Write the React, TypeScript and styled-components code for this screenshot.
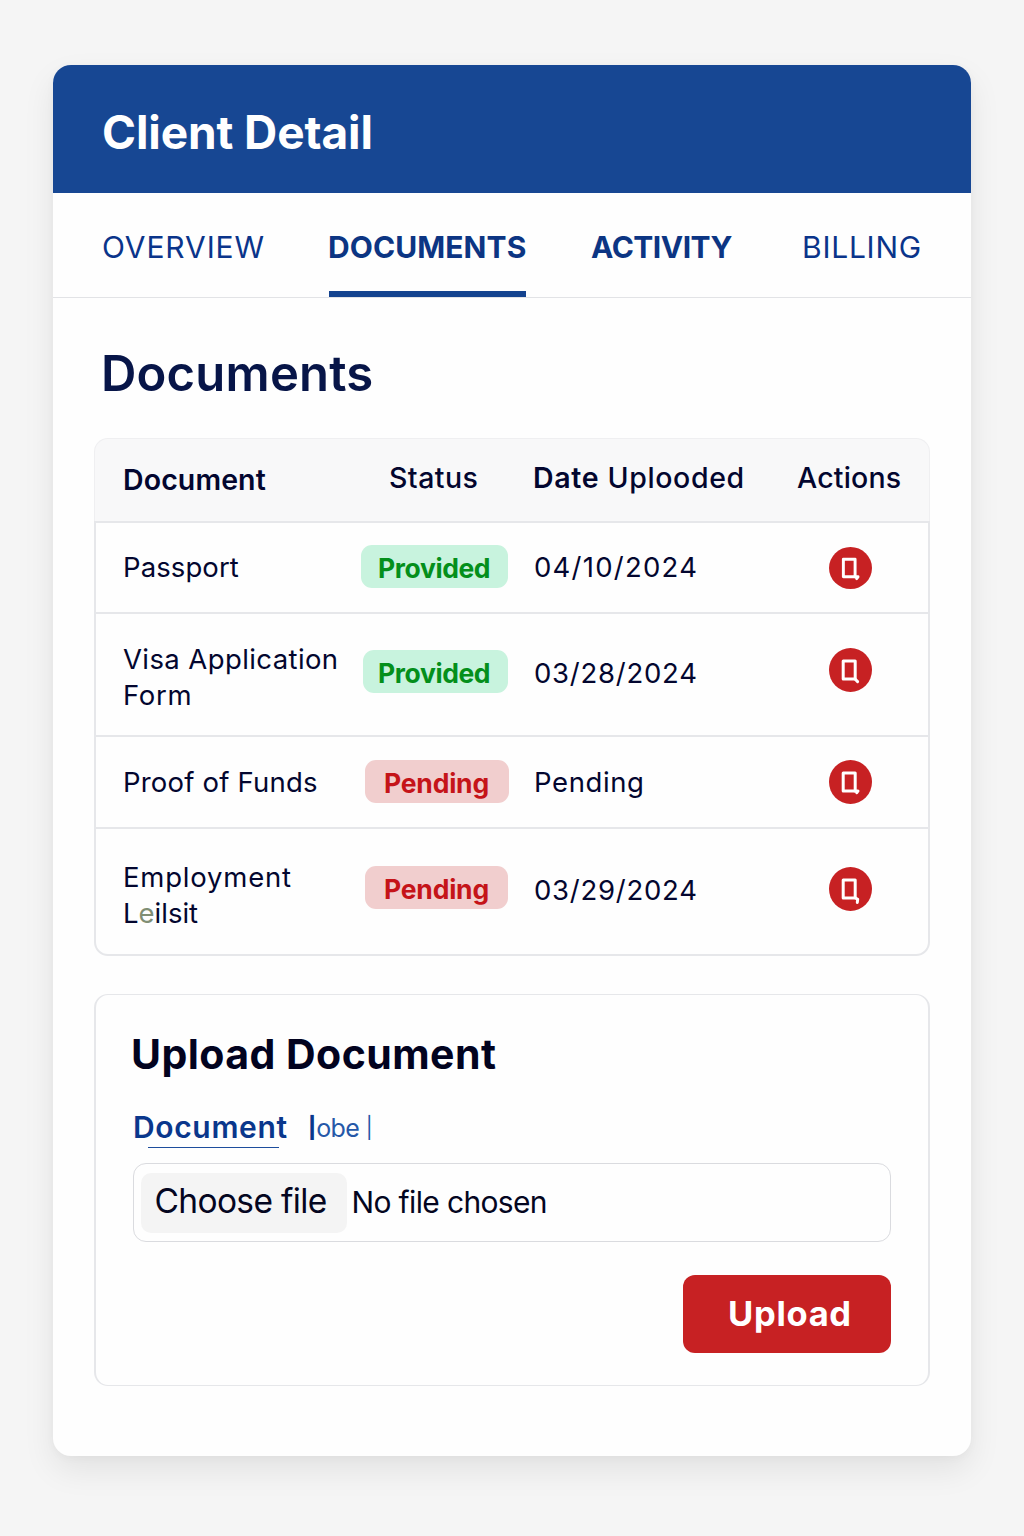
import React from 'react';
import styled, { createGlobalStyle, css } from 'styled-components';

const GlobalStyle = createGlobalStyle`
  *, *::before, *::after { box-sizing: border-box; }
  body {
    margin: 0;
    background: #f5f5f5;
    color: #03062f;
    font-family: Inter, "Liberation Sans", sans-serif;
  }
  button { font-family: inherit; border: 0; background: none; padding: 0; text-align: left; cursor: pointer; }
  h1, h2, h3 { margin: 0; }
`;

const line = '#e6e7ea';

const Page = styled.div`
  height: 1536px;
  padding: 65px 53px 0;
  overflow: hidden;
`;

const Card = styled.main`
  width: 918px;
  height: 1391px;
  border-radius: 18px;
  background: #fefefe;
  overflow: hidden;
  box-shadow: 0 14px 32px rgba(0, 0, 0, 0.08), 0 2px 10px rgba(0, 0, 0, 0.03);
`;

const Header = styled.header`
  height: 128px;
  padding: 37px 0 0 49px;
  background: #174793;
`;

const PageTitle = styled.h1`
  font-size: 46px;
  font-weight: 700;
  line-height: 60px;
  letter-spacing: -0.1px;
  color: #fff;
`;

const Tabs = styled.nav`
  display: grid;
  grid-template-columns: 227px 262px 211px 1fr;
  justify-items: start;
  height: 105px;
  padding-left: 49px;
  box-shadow: inset 0 -1px 0 #e2e3e6;
`;

const Tab = styled.button<{ $strong?: boolean; $active?: boolean; $track: number }>`
  height: 104px;
  font-size: 30px;
  line-height: 109px;
  white-space: nowrap;
  font-weight: ${p => (p.$strong ? 700 : 400)};
  letter-spacing: ${p => p.$track}px;
  color: ${p => (p.$strong ? '#0c3583' : '#0a348a')};
  ${p =>
    p.$active &&
    css`
      width: 197px;
      text-indent: -1px;
      border-bottom: 6px solid #14438f;
    `}
`;

const Content = styled.div`
  padding: 45px 41px 0;
`;

const SectionTitle = styled.h2`
  margin: 0 0 34px 7px;
  padding-top: 1px;
  font-size: 49px;
  font-weight: 600;
  line-height: 60px;
  letter-spacing: 0.2px;
  color: #071548;
`;

const Table = styled.div`
  width: 836px;
`;

const HeadRow = styled.div`
  display: grid;
  grid-template-columns: 266px 144px 264px 1fr;
  height: 83px;
  padding-left: 28px;
  padding-top: 19px;
  border: 1px solid #efeff1;
  border-bottom: 0;
  border-radius: 14px 14px 0 0;
  background: #f8f8f9;
`;

const HeadCell = styled.div<{ $strong?: boolean; $track: number; $top?: number }>`
  padding-top: ${p => p.$top ?? 0}px;
  font-size: 28.5px;
  line-height: 40px;
  white-space: nowrap;
  font-weight: ${p => (p.$strong ? 600 : 500)};
  letter-spacing: ${p => p.$track}px;

  b {
    font-weight: 600;
    letter-spacing: 0.7px;
  }
`;

const Body = styled.div`
  border: 2px solid ${line};
  border-radius: 0 0 14px 14px;
`;

const Row = styled.div<{ $height: number }>`
  display: grid;
  grid-template-columns: 238px 173px 257px 118px;
  align-items: start;
  height: ${p => p.$height}px;
  padding-left: 27px;
  border-bottom: 2px solid ${line};

  &:last-child {
    border-bottom: 0;
  }
`;

const Name = styled.div<{ $top: number }>`
  margin-top: ${p => p.$top}px;
  font-size: 27.5px;
  line-height: 36px;
  white-space: nowrap;
`;

const NameLine = styled.div<{ $track: number }>`
  letter-spacing: ${p => p.$track}px;
`;

const Faded = styled.span`
  color: #808e74;
`;

const Pill = styled.span<{ $kind: Status; $top: number; $inset: number; $width: number }>`
  height: 43px;
  width: ${p => p.$width}px;
  margin: ${p => p.$top}px 0 0 ${p => p.$inset}px;
  padding-left: ${p => (p.$kind === 'Provided' ? 17 - p.$inset : 19)}px;
  border-radius: 11px;
  font-size: 26.5px;
  font-weight: 650;
  line-height: 46px;
  background: ${p => (p.$kind === 'Provided' ? '#c8f3de' : '#f1cece')};
  color: ${p => (p.$kind === 'Provided' ? '#048f1b' : '#c51419')};
  letter-spacing: ${p => (p.$kind === 'Provided' ? -0.4 : -0.2)}px;
`;

const DateCell = styled.div<{ $top: number; $track: number }>`
  margin-top: ${p => p.$top}px;
  font-size: 27.5px;
  line-height: 36px;
  letter-spacing: ${p => p.$track}px;
`;

const ActionButton = styled.button<{ $top: number; $height: number }>`
  justify-self: center;
  width: 43px;
  height: ${p => p.$height}px;
  margin-top: ${p => p.$top}px;
  border-radius: 50%;
  background: #c72123;

  svg {
    display: block;
    width: 100%;
    height: 100%;
  }
`;

const UploadCard = styled.section`
  width: 836px;
  height: 392px;
  margin-top: 38px;
  padding: 34px 37px 0;
  border: solid ${line};
  border-width: 1px 2px;
  border-radius: 14px;
`;

const UploadTitle = styled.h3`
  margin-left: -2px;
  font-size: 41px;
  font-weight: 700;
  line-height: 50px;
  letter-spacing: 0.45px;
  color: #02031f;
`;

const FieldTabs = styled.div`
  display: flex;
  height: 56px;
  margin-top: 28px;
  color: #2558a8;
`;

const FieldTab = styled.div`
  width: 175px;
  font-size: 30px;
  font-weight: 600;
  line-height: 40px;
  letter-spacing: 0.65px;
  color: #0a378c;

  &::after {
    content: '';
    display: block;
    width: 131px;
    height: 1px;
    margin-left: 15px;
    background: #1d4d9c;
  }
`;

const FieldHint = styled.div`
  font-size: 25px;
  line-height: 42px;
  letter-spacing: -0.6px;
  white-space: pre;
`;

const Divider = styled.span<{ $strong?: boolean }>`
  font-size: 21px;
  vertical-align: 2px;
  letter-spacing: ${p => (p.$strong ? 0 : 0.8)}px;
  font-weight: ${p => (p.$strong ? 800 : 400)};
  ${p => p.$strong && 'color: #0a378c;'}
`;

const FileField = styled.div`
  display: flex;
  align-items: center;
  width: 758px;
  height: 79px;
  padding-left: 7px;
  border: 1px solid #dadbdf;
  border-radius: 13px;
  color: #04061f;
`;

const ChooseButton = styled.button`
  width: 206px;
  height: 60px;
  padding: 0 0 4px 13.5px;
  border-radius: 10px;
  background: #f4f4f4;
  color: inherit;
  font-size: 33.5px;
  line-height: 56px;
  letter-spacing: -0.65px;
`;

const FileName = styled.span`
  padding: 0 0 1px 4.5px;
  font-size: 30px;
  letter-spacing: -0.65px;
`;

const UploadButton = styled.button`
  display: block;
  width: 208px;
  height: 78px;
  margin: 33px 0 0 auto;
  padding-left: 45px;
  border-radius: 12px;
  background: #c72123;
  color: #fff;
  font-size: 34.5px;
  font-weight: 700;
  line-height: 76px;
  letter-spacing: 0.7px;
`;

type Status = 'Provided' | 'Pending';

interface Doc {
  height: number;
  name: { text: React.ReactNode; track: number }[];
  nameTop: number;
  status: Status;
  pill: { top: number; inset: number; width: number };
  date: string;
  dateTop: number;
  dateTrack: number;
  action: { top: number; height: number; tail: string };
}

const docs: Doc[] = [
  {
    height: 91,
    name: [{ text: 'Passport', track: 0.1 }],
    nameTop: 26,
    status: 'Provided',
    pill: { top: 22, inset: 0, width: 147 },
    date: '04/10/2024',
    dateTop: 26,
    dateTrack: 1.25,
    action: { top: 24, height: 42, tail: 'M26 30.5h3.2l-1.4 1.9' },
  },
  {
    height: 123,
    name: [
      { text: 'Visa Application', track: 0.4 },
      { text: 'Form', track: 0.7 },
    ],
    nameTop: 27,
    status: 'Provided',
    pill: { top: 36, inset: 2, width: 145 },
    date: '03/28/2024',
    dateTop: 41,
    dateTrack: 0.75,
    action: { top: 34, height: 44, tail: 'M26 30.5l2.6 2.6' },
  },
  {
    height: 92,
    name: [{ text: 'Proof of Funds', track: 0.2 }],
    nameTop: 27,
    status: 'Pending',
    pill: { top: 23, inset: 4, width: 144 },
    date: 'Pending',
    dateTop: 27,
    dateTrack: 0.6,
    action: { top: 23, height: 44, tail: 'M26 30.5h3l-1.2 1.7' },
  },
  {
    height: 125,
    name: [
      { text: 'Employment', track: 0.8 },
      { text: <>L<Faded>e</Faded>ilsit</>, track: 0 },
    ],
    nameTop: 30,
    status: 'Pending',
    pill: { top: 37, inset: 4, width: 143 },
    date: '03/29/2024',
    dateTop: 43,
    dateTrack: 0.75,
    action: { top: 38, height: 44, tail: 'M26.5 30.5l2.2 1.2-.4 3.2' },
  },
];

const PageGlyph = ({ tail }: { tail: string }) => (
  <svg viewBox="0 0 43 43" fill="none" stroke="#fff" strokeWidth="3" strokeLinecap="round" strokeLinejoin="round">
    <path d="M14.2 12.5h12v18h-12z" />
    <path d={tail} />
  </svg>
);

export default function App() {
  return (
    <>
      <GlobalStyle />
      <Page>
        <Card>
          <Header>
            <PageTitle>Client Detail</PageTitle>
          </Header>
          <Tabs>
            <Tab $track={0.9}>OVERVIEW</Tab>
            <Tab $strong $active $track={0.08}>DOCUMENTS</Tab>
            <Tab $strong $track={-0.5}>ACTIVITY</Tab>
            <Tab $track={0.75}>BILLING</Tab>
          </Tabs>
          <Content>
            <SectionTitle>Documents</SectionTitle>
            <Table>
              <HeadRow>
                <HeadCell $strong $track={0.1} $top={2}>Document</HeadCell>
                <HeadCell $track={0.45}>Status</HeadCell>
                <HeadCell $track={0.6}><b>Date</b> Uplooded</HeadCell>
                <HeadCell $track={0.2}>Actions</HeadCell>
              </HeadRow>
              <Body>
                {docs.map((doc, i) => (
                  <Row key={i} $height={doc.height}>
                    <Name $top={doc.nameTop}>
                      {doc.name.map((part, j) => (
                        <NameLine key={j} $track={part.track}>{part.text}</NameLine>
                      ))}
                    </Name>
                    <Pill $kind={doc.status} $top={doc.pill.top} $inset={doc.pill.inset} $width={doc.pill.width}>
                      {doc.status}
                    </Pill>
                    <DateCell $top={doc.dateTop} $track={doc.dateTrack}>{doc.date}</DateCell>
                    <ActionButton $top={doc.action.top} $height={doc.action.height} aria-label="View document">
                      <PageGlyph tail={doc.action.tail} />
                    </ActionButton>
                  </Row>
                ))}
              </Body>
            </Table>
            <UploadCard>
              <UploadTitle>Upload Document</UploadTitle>
              <FieldTabs>
                <FieldTab>Document</FieldTab>
                <FieldHint><Divider $strong>|</Divider>obe <Divider>|</Divider></FieldHint>
              </FieldTabs>
              <FileField>
                <ChooseButton>Choose file</ChooseButton>
                <FileName>No file chosen</FileName>
              </FileField>
              <UploadButton>Upload</UploadButton>
            </UploadCard>
          </Content>
        </Card>
      </Page>
    </>
  );
}
